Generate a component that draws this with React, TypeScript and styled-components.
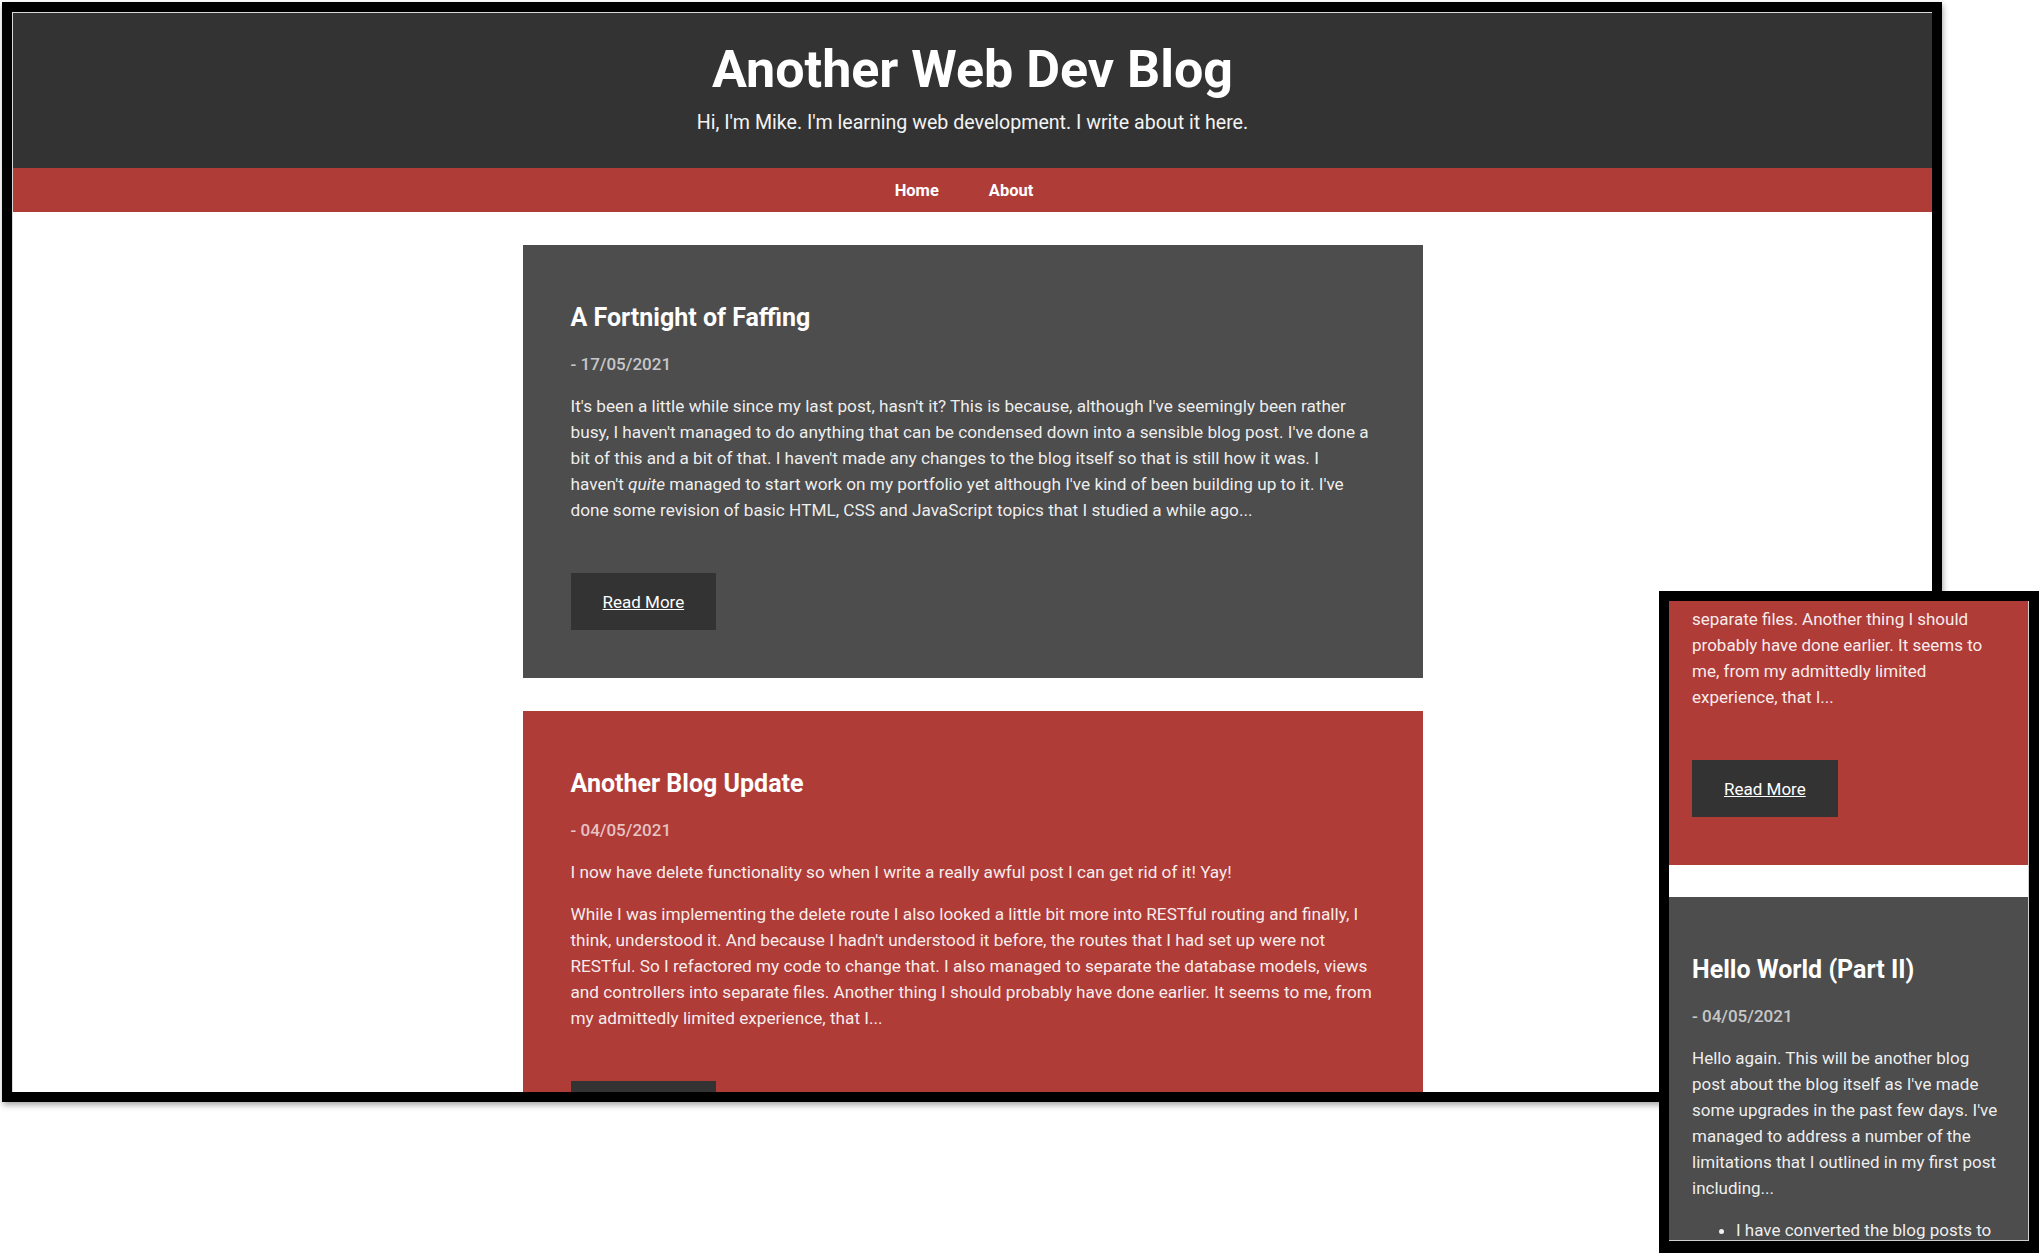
import React, { useLayoutEffect, useRef } from "react";
import styled, { createGlobalStyle } from "styled-components";

const GlobalStyle = createGlobalStyle`
  html, body { margin: 0; padding: 0; background: #ffffff; overflow: hidden; }
  body { font-family: Roboto, "Liberation Sans", sans-serif; }
  *, *::before, *::after { box-sizing: border-box; }
`;

const RED = "#b03c38";
const DARK = "#333333";
const GREY = "#4d4d4d";

const Stage = styled.div`
  position: relative;
  width: 2041px;
  height: 1253px;
  overflow: hidden;
  padding: 2px 0 0 2px;
`;

const DesktopFrame = styled.div`
  width: 1940px;
  height: 1100px;
  border: 10px solid #000;
  background: #fff;
  box-shadow: 1px 3px 6px rgba(0, 0, 0, 0.35);
  overflow: hidden;
`;

const DesktopScreen = styled.div`
  height: 100%;
  border-top: 1px solid #d9d9d9;
  border-left: 1px solid #d9d9d9;
  overflow: hidden;
`;

const MobileFrame = styled.div`
  position: absolute;
  left: 1659px;
  top: 591px;
  width: 380px;
  height: 662px;
  border: 10px solid #000;
  border-bottom-width: 12px;
  background: #fff;
`;

const MobileScreen = styled.div`
  height: 100%;
  overflow: hidden;
  border-right: 1px solid #cfcfcf;
  border-bottom: 1px solid #cfcfcf;
`;

const Header = styled.header<{ $compact?: boolean }>`
  background: ${DARK};
  height: ${(p) => (p.$compact ? "auto" : "155px")};
  padding: ${(p) => (p.$compact ? "24px 16px" : "26px 0 0")};
  display: flex;
  flex-direction: column;
  align-items: center;
  text-align: center;
`;

const SiteTitle = styled.h1`
  margin: 0;
  color: #ffffff;
  font-size: 52px;
  line-height: 62px;
  font-weight: 700;
`;

const Tagline = styled.p`
  margin: 9px 0 0;
  color: #f4f4f4;
  font-size: 19.6px;
  line-height: 26px;
`;

const Nav = styled.nav`
  background: ${RED};
  height: 44px;
  display: flex;
  justify-content: center;
  align-items: center;
  padding-right: 17px;
`;

const NavLink = styled.a`
  color: #ffffff;
  font-weight: 700;
  font-size: 16.5px;
  text-decoration: none;
  padding: 0 25px;
`;

const Main = styled.main<{ $compact?: boolean }>`
  display: flex;
  flex-direction: column;
  align-items: center;
  gap: ${(p) => (p.$compact ? "32px" : "33px")};
  padding-top: ${(p) => (p.$compact ? "0" : "33px")};
`;

const Card = styled.article<{ $tone: "grey" | "red"; $compact?: boolean }>`
  width: ${(p) => (p.$compact ? "100%" : "900px")};
  background: ${(p) => (p.$tone === "red" ? RED : GREY)};
  padding: ${(p) => (p.$compact ? "58px 28px 48px 23px" : "58px 48px 48px")};
  color: rgba(255, 255, 255, 0.92);
  font-size: ${(p) => (p.$compact ? "17px" : "17.2px")};
`;

const PostTitle = styled.h2`
  margin: 0;
  color: #ffffff;
  font-size: 25px;
  line-height: 30px;
  font-weight: 700;
`;

const PostDate = styled.p`
  margin: 18px 0 0;
  color: rgba(255, 255, 255, 0.7);
  font-size: 17px;
  line-height: 26px;
  font-weight: 500;
`;

const Para = styled.p`
  margin: 16px 0 0;
  font-size: inherit;
  line-height: 26px;
`;

const List = styled.ul`
  margin: 16px 0 0;
  padding-left: 44px;
  font-size: inherit;
  line-height: 26px;
`;

const ReadMore = styled.a`
  display: inline-flex;
  align-items: center;
  justify-content: center;
  margin-top: 50px;
  height: 57px;
  padding: 0 32px;
  background: ${DARK};
  color: #ffffff;
  font-size: 17px;
  text-decoration: underline;
`;

type Props = { compact?: boolean; lastRef?: React.Ref<HTMLElement> };

function Posts({ compact, lastRef }: Props) {
  return (
    <Main $compact={compact}>
      <Card $tone="grey" $compact={compact}>
        <PostTitle>A Fortnight of Faffing</PostTitle>
        <PostDate>- 17/05/2021</PostDate>
        <Para>
          It's been a little while since my last post, hasn't it? This is because, although I've
          seemingly been rather busy, I haven't managed to do anything that can be condensed down
          into a sensible blog post. I've done a bit of this and a bit of that. I haven't made any
          changes to the blog itself so that is still how it was. I haven't <em>quite</em> managed
          to start work on my portfolio yet although I've kind of been building up to it. I've done
          some revision of basic HTML, CSS and JavaScript topics that I studied a while ago...
        </Para>
        <ReadMore>Read More</ReadMore>
      </Card>
      <Card $tone="red" $compact={compact}>
        <PostTitle>Another Blog Update</PostTitle>
        <PostDate>- 04/05/2021</PostDate>
        <Para>
          I now have delete functionality so when I write a really awful post I can get rid of it!
          Yay!
        </Para>
        <Para>
          While I was implementing the delete route I also looked a little bit more into RESTful
          routing and finally, I think, understood it. And because I hadn't understood it before,
          the routes that I had set up were not RESTful. So I refactored my code to change that. I
          also managed to separate the database models, views and controllers into separate files.
          Another thing I should probably have done earlier. It seems to me, from my admittedly
          limited experience, that I...
        </Para>
        <ReadMore>Read More</ReadMore>
      </Card>
      <Card $tone="grey" $compact={compact} ref={lastRef as React.Ref<HTMLElement>}>
        <PostTitle>Hello World (Part II)</PostTitle>
        <PostDate>- 04/05/2021</PostDate>
        <Para>
          Hello again. This will be another blog post about the blog itself as I've made some
          upgrades in the past few days. I've managed to address a number of the limitations that I
          outlined in my first post including...
        </Para>
        <List>
          <li>I have converted the blog posts to use Markdown so that I can format them properly.</li>
          <li>I have added pagination to the home page.</li>
        </List>
        <ReadMore>Read More</ReadMore>
      </Card>
    </Main>
  );
}

function SiteHeader({ compact }: { compact?: boolean }) {
  return (
    <>
      <Header $compact={compact}>
        <SiteTitle>Another Web Dev Blog</SiteTitle>
        <Tagline>Hi, I'm Mike. I'm learning web development. I write about it here.</Tagline>
      </Header>
      <Nav>
        <NavLink>Home</NavLink>
        <NavLink>About</NavLink>
      </Nav>
    </>
  );
}

export default function App() {
  const screenRef = useRef<HTMLDivElement>(null);
  const lastRef = useRef<HTMLElement>(null);

  useLayoutEffect(() => {
    const screen = screenRef.current;
    const last = lastRef.current;
    if (screen && last) {
      const offset =
        last.getBoundingClientRect().top - screen.getBoundingClientRect().top + screen.scrollTop;
      screen.scrollTop = offset - 296;
    }
  }, []);

  return (
    <>
      <GlobalStyle />
      <Stage>
        <DesktopFrame>
          <DesktopScreen>
            <SiteHeader />
            <Posts />
          </DesktopScreen>
        </DesktopFrame>
        <MobileFrame>
          <MobileScreen ref={screenRef}>
            <SiteHeader compact />
            <Posts compact lastRef={lastRef} />
          </MobileScreen>
        </MobileFrame>
      </Stage>
    </>
  );
}
